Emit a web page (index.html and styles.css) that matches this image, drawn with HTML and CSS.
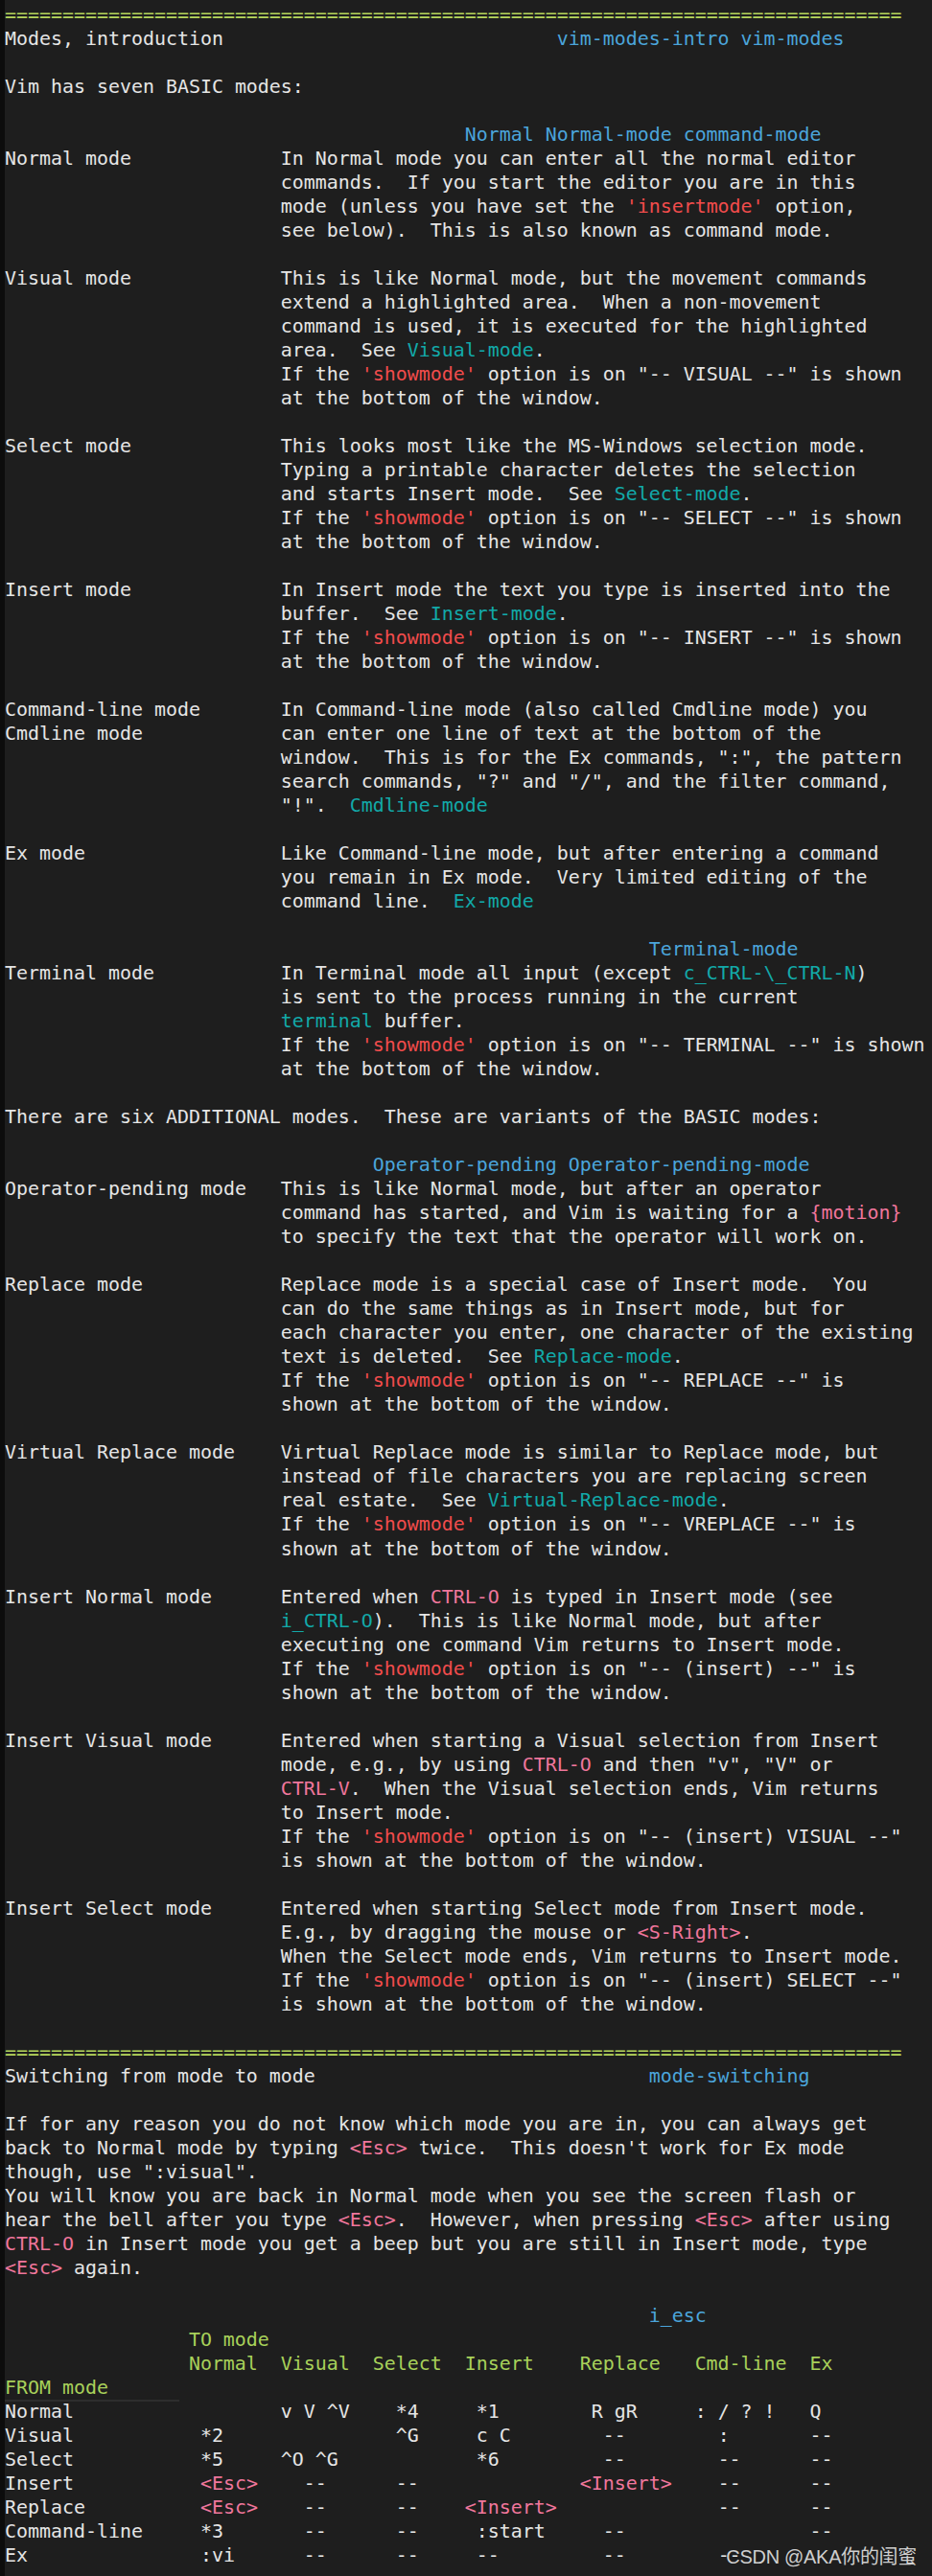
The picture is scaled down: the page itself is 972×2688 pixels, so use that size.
FILE: index.html
```
<!DOCTYPE html>
<html lang="en">
<head>
<meta charset="utf-8">
<title>Vim help - Modes, introduction</title>
<link rel="stylesheet" href="styles.css">
</head>
<body>
<main class="screen">
<div class="line sep">==============================================================================</div>
<div class="headrow at48"><span>Modes, introduction</span><span class="tag">vim-modes-intro vim-modes</span></div>
<div class="blank"></div>
<div class="line">Vim has seven BASIC modes:</div>
<div class="blank"></div>
<div class="line pad40"><span class="tag">Normal Normal-mode command-mode</span></div>

<section class="def">
  <div class="label"><div class="line">Normal mode</div></div>
  <div class="desc">
    <div class="line">In Normal mode you can enter all the normal editor</div>
    <div class="line">commands.  If you start the editor you are in this</div>
    <div class="line">mode (unless you have set the <span class="opt">'insertmode'</span> option,</div>
    <div class="line">see below).  This is also known as command mode.</div>
  </div>
</section>
<div class="blank"></div>

<section class="def">
  <div class="label"><div class="line">Visual mode</div></div>
  <div class="desc">
    <div class="line">This is like Normal mode, but the movement commands</div>
    <div class="line">extend a highlighted area.  When a non-movement</div>
    <div class="line">command is used, it is executed for the highlighted</div>
    <div class="line">area.  See <span class="link">Visual-mode</span>.</div>
    <div class="line">If the <span class="opt">'showmode'</span> option is on "-- VISUAL --" is shown</div>
    <div class="line">at the bottom of the window.</div>
  </div>
</section>
<div class="blank"></div>

<section class="def">
  <div class="label"><div class="line">Select mode</div></div>
  <div class="desc">
    <div class="line">This looks most like the MS-Windows selection mode.</div>
    <div class="line">Typing a printable character deletes the selection</div>
    <div class="line">and starts Insert mode.  See <span class="link">Select-mode</span>.</div>
    <div class="line">If the <span class="opt">'showmode'</span> option is on "-- SELECT --" is shown</div>
    <div class="line">at the bottom of the window.</div>
  </div>
</section>
<div class="blank"></div>

<section class="def">
  <div class="label"><div class="line">Insert mode</div></div>
  <div class="desc">
    <div class="line">In Insert mode the text you type is inserted into the</div>
    <div class="line">buffer.  See <span class="link">Insert-mode</span>.</div>
    <div class="line">If the <span class="opt">'showmode'</span> option is on "-- INSERT --" is shown</div>
    <div class="line">at the bottom of the window.</div>
  </div>
</section>
<div class="blank"></div>

<section class="def">
  <div class="label"><div class="line">Command-line mode</div><div class="line">Cmdline mode</div></div>
  <div class="desc">
    <div class="line">In Command-line mode (also called Cmdline mode) you</div>
    <div class="line">can enter one line of text at the bottom of the</div>
    <div class="line">window.  This is for the Ex commands, ":", the pattern</div>
    <div class="line">search commands, "?" and "/", and the filter command,</div>
    <div class="line">"!".  <span class="link">Cmdline-mode</span></div>
  </div>
</section>
<div class="blank"></div>

<section class="def">
  <div class="label"><div class="line">Ex mode</div></div>
  <div class="desc">
    <div class="line">Like Command-line mode, but after entering a command</div>
    <div class="line">you remain in Ex mode.  Very limited editing of the</div>
    <div class="line">command line.  <span class="link">Ex-mode</span></div>
  </div>
</section>
<div class="blank"></div>

<div class="line pad56"><span class="tag">Terminal-mode</span></div>
<section class="def">
  <div class="label"><div class="line">Terminal mode</div></div>
  <div class="desc">
    <div class="line">In Terminal mode all input (except <span class="link">c_CTRL-\_CTRL-N</span>)</div>
    <div class="line">is sent to the process running in the current</div>
    <div class="line"><span class="link">terminal</span> buffer.</div>
    <div class="line">If the <span class="opt">'showmode'</span> option is on "-- TERMINAL --" is shown</div>
    <div class="line">at the bottom of the window.</div>
  </div>
</section>
<div class="blank"></div>

<div class="line">There are six ADDITIONAL modes.  These are variants of the BASIC modes:</div>
<div class="blank"></div>

<div class="line pad32"><span class="tag">Operator-pending Operator-pending-mode</span></div>
<section class="def">
  <div class="label"><div class="line">Operator-pending mode</div></div>
  <div class="desc">
    <div class="line">This is like Normal mode, but after an operator</div>
    <div class="line">command has started, and Vim is waiting for a <span class="key">{motion}</span></div>
    <div class="line">to specify the text that the operator will work on.</div>
  </div>
</section>
<div class="blank"></div>

<section class="def">
  <div class="label"><div class="line">Replace mode</div></div>
  <div class="desc">
    <div class="line">Replace mode is a special case of Insert mode.  You</div>
    <div class="line">can do the same things as in Insert mode, but for</div>
    <div class="line">each character you enter, one character of the existing</div>
    <div class="line">text is deleted.  See <span class="link">Replace-mode</span>.</div>
    <div class="line">If the <span class="opt">'showmode'</span> option is on "-- REPLACE --" is</div>
    <div class="line">shown at the bottom of the window.</div>
  </div>
</section>
<div class="blank"></div>

<section class="def">
  <div class="label"><div class="line">Virtual Replace mode</div></div>
  <div class="desc">
    <div class="line">Virtual Replace mode is similar to Replace mode, but</div>
    <div class="line">instead of file characters you are replacing screen</div>
    <div class="line">real estate.  See <span class="link">Virtual-Replace-mode</span>.</div>
    <div class="line">If the <span class="opt">'showmode'</span> option is on "-- VREPLACE --" is</div>
    <div class="line">shown at the bottom of the window.</div>
  </div>
</section>
<div class="blank"></div>

<section class="def">
  <div class="label"><div class="line">Insert Normal mode</div></div>
  <div class="desc">
    <div class="line">Entered when <span class="key">CTRL-O</span> is typed in Insert mode (see</div>
    <div class="line"><span class="link">i_CTRL-O</span>).  This is like Normal mode, but after</div>
    <div class="line">executing one command Vim returns to Insert mode.</div>
    <div class="line">If the <span class="opt">'showmode'</span> option is on "-- (insert) --" is</div>
    <div class="line">shown at the bottom of the window.</div>
  </div>
</section>
<div class="blank"></div>

<section class="def">
  <div class="label"><div class="line">Insert Visual mode</div></div>
  <div class="desc">
    <div class="line">Entered when starting a Visual selection from Insert</div>
    <div class="line">mode, e.g., by using <span class="key">CTRL-O</span> and then "v", "V" or</div>
    <div class="line"><span class="key">CTRL-V</span>.  When the Visual selection ends, Vim returns</div>
    <div class="line">to Insert mode.</div>
    <div class="line">If the <span class="opt">'showmode'</span> option is on "-- (insert) VISUAL --"</div>
    <div class="line">is shown at the bottom of the window.</div>
  </div>
</section>
<div class="blank"></div>

<section class="def">
  <div class="label"><div class="line">Insert Select mode</div></div>
  <div class="desc">
    <div class="line">Entered when starting Select mode from Insert mode.</div>
    <div class="line">E.g., by dragging the mouse or <span class="key">&lt;S-Right&gt;</span>.</div>
    <div class="line">When the Select mode ends, Vim returns to Insert mode.</div>
    <div class="line">If the <span class="opt">'showmode'</span> option is on "-- (insert) SELECT --"</div>
    <div class="line">is shown at the bottom of the window.</div>
  </div>
</section>
<div class="blank"></div>

<div class="line sep">==============================================================================</div>
<div class="headrow at56"><span>Switching from mode to mode</span><span class="tag">mode-switching</span></div>
<div class="blank"></div>
<div class="line">If for any reason you do not know which mode you are in, you can always get</div>
<div class="line">back to Normal mode by typing <span class="key">&lt;Esc&gt;</span> twice.  This doesn't work for Ex mode</div>
<div class="line">though, use ":visual".</div>
<div class="line">You will know you are back in Normal mode when you see the screen flash or</div>
<div class="line">hear the bell after you type <span class="key">&lt;Esc&gt;</span>.  However, when pressing <span class="key">&lt;Esc&gt;</span> after using</div>
<div class="line"><span class="key">CTRL-O</span> in Insert mode you get a beep but you are still in Insert mode, type</div>
<div class="line"><span class="key">&lt;Esc&gt;</span> again.</div>
<div class="blank"></div>

<div class="line pad56"><span class="tag">i_esc</span></div>
<div class="line pad16"><span class="hdr">TO mode</span></div>
<div class="line pad16"><span class="hdr">Normal  Visual  Select  Insert    Replace   Cmd-line  Ex</span></div>
<div class="line"><span class="cursorline hdr">FROM mode</span></div>
<div class="line">Normal                  v V ^V    *4     *1        R gR     : / ? !   Q</div>
<div class="line">Visual           *2               ^G     c C        --        :       --</div>
<div class="line">Select           *5     ^O ^G            *6         --        --      --</div>
<div class="line">Insert           <span class="key">&lt;Esc&gt;</span>    --      --              <span class="key">&lt;Insert&gt;</span>    --      --</div>
<div class="line">Replace          <span class="key">&lt;Esc&gt;</span>    --      --    <span class="key">&lt;Insert&gt;</span>              --      --</div>
<div class="line">Command-line     *3       --      --     :start     --                --</div>
<div class="line">Ex               :vi      --      --     --         --        --</div>

<div class="watermark">CSDN @AKA你的闺蜜</div>
</main>
</body>
</html>
```

FILE: styles.css
```
html, body {
  margin: 0;
  padding: 0;
  background: #1e1e1e;
}

.screen {
  --lh: 25.03px;
  position: relative;
  box-sizing: border-box;
  min-height: 2688px;
  border-left: 5px solid #0c0c0c;
  padding-top: 2.5px;
  font-family: "DejaVu Sans Mono", monospace;
  font-size: 19.93px;
  line-height: var(--lh);
  color: #e5e5e5;
}

.line {
  white-space: pre;
  height: var(--lh);
}

.blank {
  height: var(--lh);
}

.sep {
  color: #b5d55c;
}

.headrow {
  display: grid;
  white-space: pre;
  height: var(--lh);
}

.headrow.at48 {
  grid-template-columns: 48ch auto;
}

.headrow.at56 {
  grid-template-columns: 56ch auto;
}

.pad16 { padding-left: 16ch; }
.pad32 { padding-left: 32ch; }
.pad40 { padding-left: 40ch; }
.pad56 { padding-left: 56ch; }

.def {
  display: grid;
  grid-template-columns: 24ch auto;
}

.tag {
  color: #4ba5db;
}

.link {
  color: #12a9a9;
}

.opt {
  color: #f14c4c;
}

.key {
  color: #f0769c;
}

.hdr {
  color: #a8d15a;
}

.cursorline {
  display: inline-block;
  vertical-align: top;
  width: 15.2ch;
  height: var(--lh);
  box-shadow: 0 2px 0 #2d2d2d;
}

.watermark {
  position: absolute;
  right: 16px;
  bottom: 10px;
  font-family: "Liberation Sans", "Noto Sans CJK SC", sans-serif;
  font-size: 20px;
  line-height: 20px;
  color: #cfcfcf;
  letter-spacing: -0.3px;
}
```
